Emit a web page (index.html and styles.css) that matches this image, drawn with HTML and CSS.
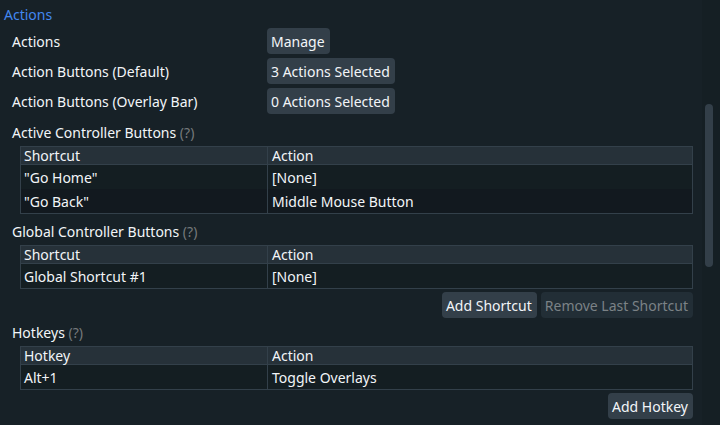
FILE: index.html
```html
<!DOCTYPE html>
<html lang="en">
<head>
<meta charset="utf-8">
<title>Actions</title>
<link rel="stylesheet" href="styles.css">
</head>
<body>
<div class="panel">
  <main class="content">
    <h1 class="title">Actions</h1>
    <div class="settings">
      <label for="manage">Actions</label>
      <button id="manage" class="button" type="button">Manage</button>
      <label for="default">Action Buttons (Default)</label>
      <button id="default" class="button" type="button">3 Actions Selected</button>
      <label for="overlay">Action Buttons (Overlay Bar)</label>
      <button id="overlay" class="button" type="button">0 Actions Selected</button>
    </div>

    <section class="group">
      <h2 class="heading" id="active">Active Controller Buttons <span class="hint">(?)</span></h2>
      <table class="table" aria-labelledby="active">
        <thead><tr><th>Shortcut</th><th>Action</th></tr></thead>
        <tbody>
          <tr><td>"Go Home"</td><td>[None]</td></tr>
          <tr><td>"Go Back"</td><td>Middle Mouse Button</td></tr>
        </tbody>
      </table>
    </section>

    <section class="group">
      <h2 class="heading" id="global">Global Controller Buttons <span class="hint">(?)</span></h2>
      <table class="table" aria-labelledby="global">
        <thead><tr><th>Shortcut</th><th>Action</th></tr></thead>
        <tbody><tr><td>Global Shortcut #1</td><td>[None]</td></tr></tbody>
      </table>
      <div class="buttons">
        <button class="button" type="button">Add Shortcut</button>
        <button class="button" type="button" disabled>Remove Last Shortcut</button>
      </div>
    </section>

    <section class="group group-close">
      <h2 class="heading" id="hotkeys">Hotkeys <span class="hint">(?)</span></h2>
      <table class="table" aria-labelledby="hotkeys">
        <thead><tr><th>Hotkey</th><th>Action</th></tr></thead>
        <tbody><tr><td>Alt+1</td><td>Toggle Overlays</td></tr></tbody>
      </table>
      <div class="buttons">
        <button class="button" type="button">Add Hotkey</button>
      </div>
    </section>
  </main>
  <div class="scroll-track"><div class="scroll-thumb"></div></div>
</div>
</body>
</html>
```

FILE: styles.css
```css
* {
  box-sizing: border-box;
}

body {
  margin: 0;
  background: #172127;
  color: #f2f5f8;
  font: 14px/20px "Noto Sans", sans-serif;
}

.panel {
  display: flex;
  min-height: 100vh;
}

.content {
  flex: 1;
  padding: 5px 9px 4px 12px;
}

.title,
.heading {
  margin: 0;
  font-size: 14px;
  font-weight: 400;
}

.title {
  margin: 0 0 3px -8px;
  color: #4287f0;
}

.settings {
  display: grid;
  grid-template-columns: 255px 1fr;
  gap: 4px 0;
  align-items: center;
  justify-items: start;
  padding-bottom: 1px;
}

.settings label {
  padding-top: 2px;
}

.button {
  height: 26px;
  padding: 1px 5px 0 4px;
  border: 0;
  border-radius: 4px;
  background: #333f49;
  color: inherit;
  font: inherit;
}

.button:disabled {
  background: #222e36;
  color: #7b8286;
}

.group {
  margin-top: 8px;
}

.group-close {
  margin-top: 5px;
}

.hint {
  color: #75797b;
}

.table {
  width: calc(100% - 8px);
  margin: 3px 0 0 8px;
  table-layout: fixed;
  border: 1px solid #33404a;
  border-spacing: 0;
}

.table th,
.table td {
  height: 24px;
  padding: 2px 4px 0;
  text-align: left;
  font-weight: 400;
}

.table th {
  height: 18px;
  padding-top: 0;
  line-height: 17px;
  background: #263139;
  border-bottom: 1px solid #33404a;
}

.table th:first-child {
  width: 247px;
}

.table th:first-child,
.table td:first-child {
  border-right: 1px solid #33404a;
  padding-left: 3px;
}

.table tbody tr {
  background: #141e22;
}

.table tbody tr:nth-child(even) {
  background: #12191f;
}

.buttons {
  display: flex;
  justify-content: flex-end;
  gap: 4px;
  margin-top: 3px;
}

.scroll-track {
  width: 18px;
  padding: 104px 7px 0 3px;
  background: #151f24;
}

.scroll-thumb {
  height: 163px;
  border-radius: 4px;
  background: #333f49;
}
```
